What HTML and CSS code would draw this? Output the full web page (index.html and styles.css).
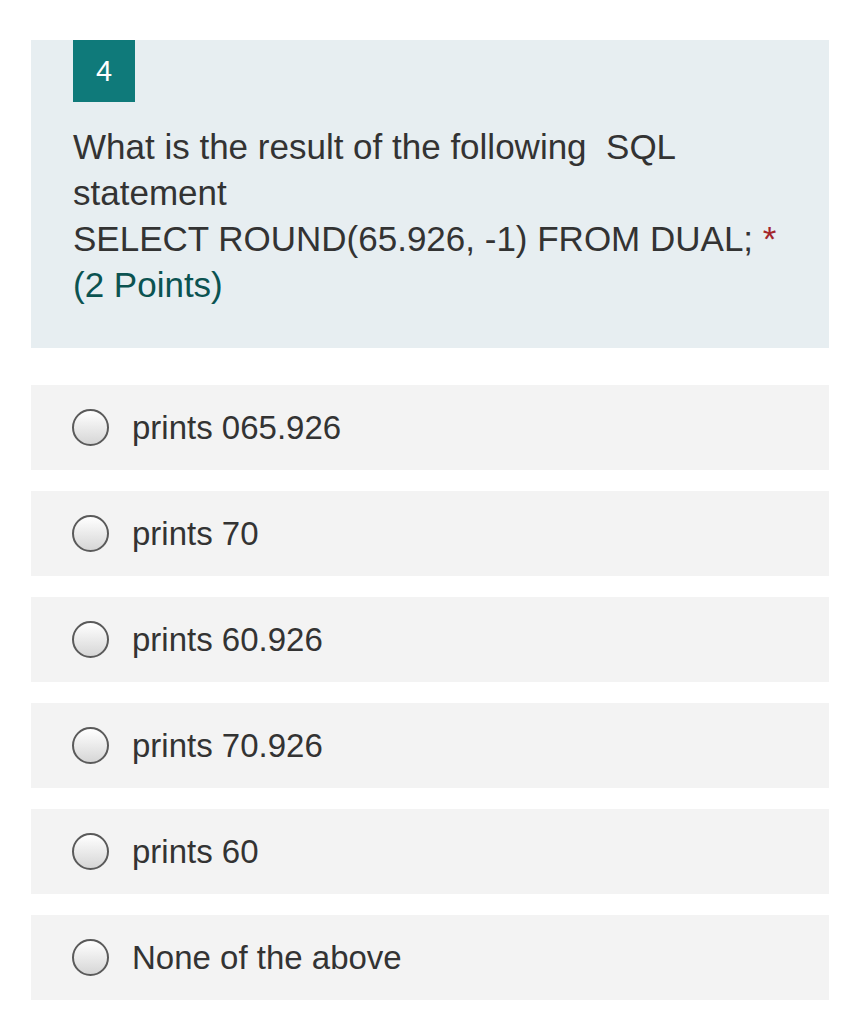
FILE: index.html
```html
<!DOCTYPE html>
<html>
<head>
<meta charset="utf-8">
<link rel="stylesheet" href="styles.css">
</head>
<body>
<div class="page">
  <div class="question">
    <div class="badge">4</div>
    <div class="qtext">What is the result of the following&nbsp; SQL statement<br>SELECT ROUND(65.926, -1) FROM DUAL; <span class="req">*</span><br><span class="points">(2 Points)</span></div>
  </div>
  <div class="options">
    <label class="option"><span class="radio"></span><span class="otext">prints 065.926</span></label>
    <label class="option"><span class="radio"></span><span class="otext">prints 70</span></label>
    <label class="option"><span class="radio"></span><span class="otext">prints 60.926</span></label>
    <label class="option"><span class="radio"></span><span class="otext">prints 70.926</span></label>
    <label class="option"><span class="radio"></span><span class="otext">prints 60</span></label>
    <label class="option"><span class="radio"></span><span class="otext">None of the above</span></label>
  </div>
</div>
</body>
</html>
```

FILE: styles.css
```css
html, body {
  margin: 0;
  padding: 0;
  background: #ffffff;
}
body {
  font-family: "Liberation Sans", Arial, sans-serif;
  color: #333333;
}
.page {
  padding: 40px 31px 0 31px;
}
.question {
  background: #e7eef1;
  padding: 0 0 40px 42px;
}
.badge {
  width: 62px;
  height: 62px;
  background: #0f7a7a;
  color: #ffffff;
  font-size: 29px;
  display: flex;
  align-items: center;
  justify-content: center;
}
.qtext {
  margin-top: 22px;
  font-size: 35px;
  line-height: 46px;
  color: #333333;
  width: 730px;
}
.req {
  color: #a4262c;
}
.points {
  color: #0b5351;
}
.options {
  margin-top: 37px;
  display: flex;
  flex-direction: column;
  gap: 21px;
}
.option {
  background: #f3f3f3;
  height: 85px;
  display: flex;
  align-items: center;
  padding-left: 41px;
}
.radio {
  width: 33px;
  height: 33px;
  border: 2px solid #5a5a5a;
  border-radius: 50%;
  background: linear-gradient(#ffffff, #d6d6d6);
  flex: none;
}
.otext {
  margin-left: 23px;
  font-size: 33px;
  color: #333333;
}
```
